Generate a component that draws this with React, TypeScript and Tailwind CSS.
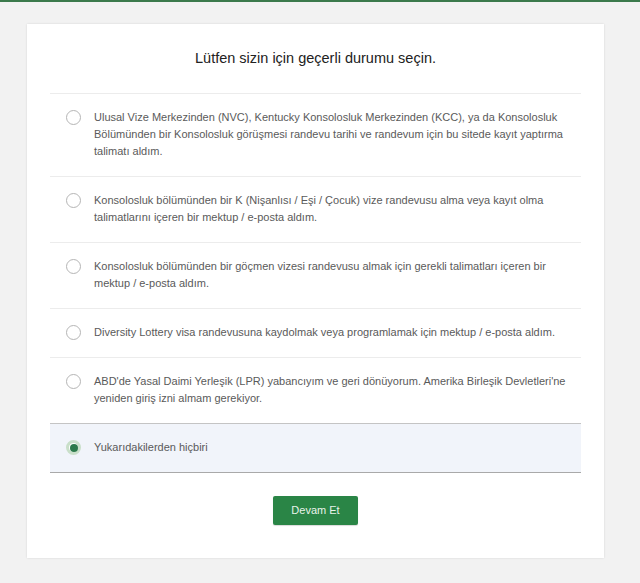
import { useState } from 'react';

const options = [
  'Ulusal Vize Merkezinden (NVC), Kentucky Konsolosluk Merkezinden (KCC), ya da Konsolosluk Bölümünden bir Konsolosluk görüşmesi randevu tarihi ve randevum için bu sitede kayıt yaptırma talimatı aldım.',
  'Konsolosluk bölümünden bir K (Nişanlısı / Eşi / Çocuk) vize randevusu alma veya kayıt olma talimatlarını içeren bir mektup / e-posta aldım.',
  'Konsolosluk bölümünden bir göçmen vizesi randevusu almak için gerekli talimatları içeren bir mektup / e-posta aldım.',
  'Diversity Lottery visa randevusuna kaydolmak veya programlamak için mektup / e-posta aldım.',
  "ABD'de Yasal Daimi Yerleşik (LPR) yabancıyım ve geri dönüyorum. Amerika Birleşik Devletleri'ne yeniden giriş izni almam gerekiyor.",
  'Yukarıdakilerden hiçbiri',
];

function Radio({ checked }: { checked: boolean }) {
  if (checked) {
    return (
      <span className="mt-[1px] flex h-[15px] w-[15px] shrink-0 items-center justify-center rounded-full border-[3px] border-[#c9dfc9] bg-white">
        <span className="h-[8px] w-[8px] rounded-full bg-[#2c7a4b]" />
      </span>
    );
  }
  return <span className="mt-[1px] h-[15px] w-[15px] shrink-0 rounded-full border border-[#b5b5b5] bg-white" />;
}

export default function App() {
  const [selected, setSelected] = useState(5);

  return (
    <div className="min-h-[583px] bg-[#f2f2f2] font-['Liberation_Sans',Arial,sans-serif]">
      <div className="h-[2px] bg-[#3b7a4c]" />
      <div className="ml-[27px] mt-[22px] w-[577px] bg-white px-[23px] pb-[33px] pt-[25px] shadow-[0_0_2px_rgba(0,0,0,0.12)]">
        <h1 className="text-center text-[14.5px] leading-[18px] text-[#222]">
          Lütfen sizin için geçerli durumu seçin.
        </h1>

        <div className="mt-[26px] border-t border-[#ececec]">
          {options.map((text, i) => {
            const isSel = i === selected;
            const nextSel = i + 1 === selected;
            return (
              <div
                key={i}
                onClick={() => setSelected(i)}
                className={
                  'flex cursor-pointer items-start gap-[13px] pb-[16px] pl-[16px] pr-[14px] pt-[15px] ' +
                  (isSel
                    ? 'border-b border-[#a9a9a9] bg-[#f1f4fa]'
                    : nextSel
                      ? 'border-b border-[#c4c4c4]'
                      : 'border-b border-[#ececec]')
                }
              >
                <Radio checked={isSel} />
                <span className="text-[11px] leading-[17px] text-[#5a5a5a]">{text}</span>
              </div>
            );
          })}
        </div>

        <div className="mt-[23px] flex justify-center">
          <button className="h-[29px] w-[85px] rounded-[2px] bg-[#2a8546] text-[11px] text-[#e8f3ea] shadow-[0_1px_1px_rgba(0,0,0,0.15)]">
            Devam Et
          </button>
        </div>
      </div>
    </div>
  );
}
